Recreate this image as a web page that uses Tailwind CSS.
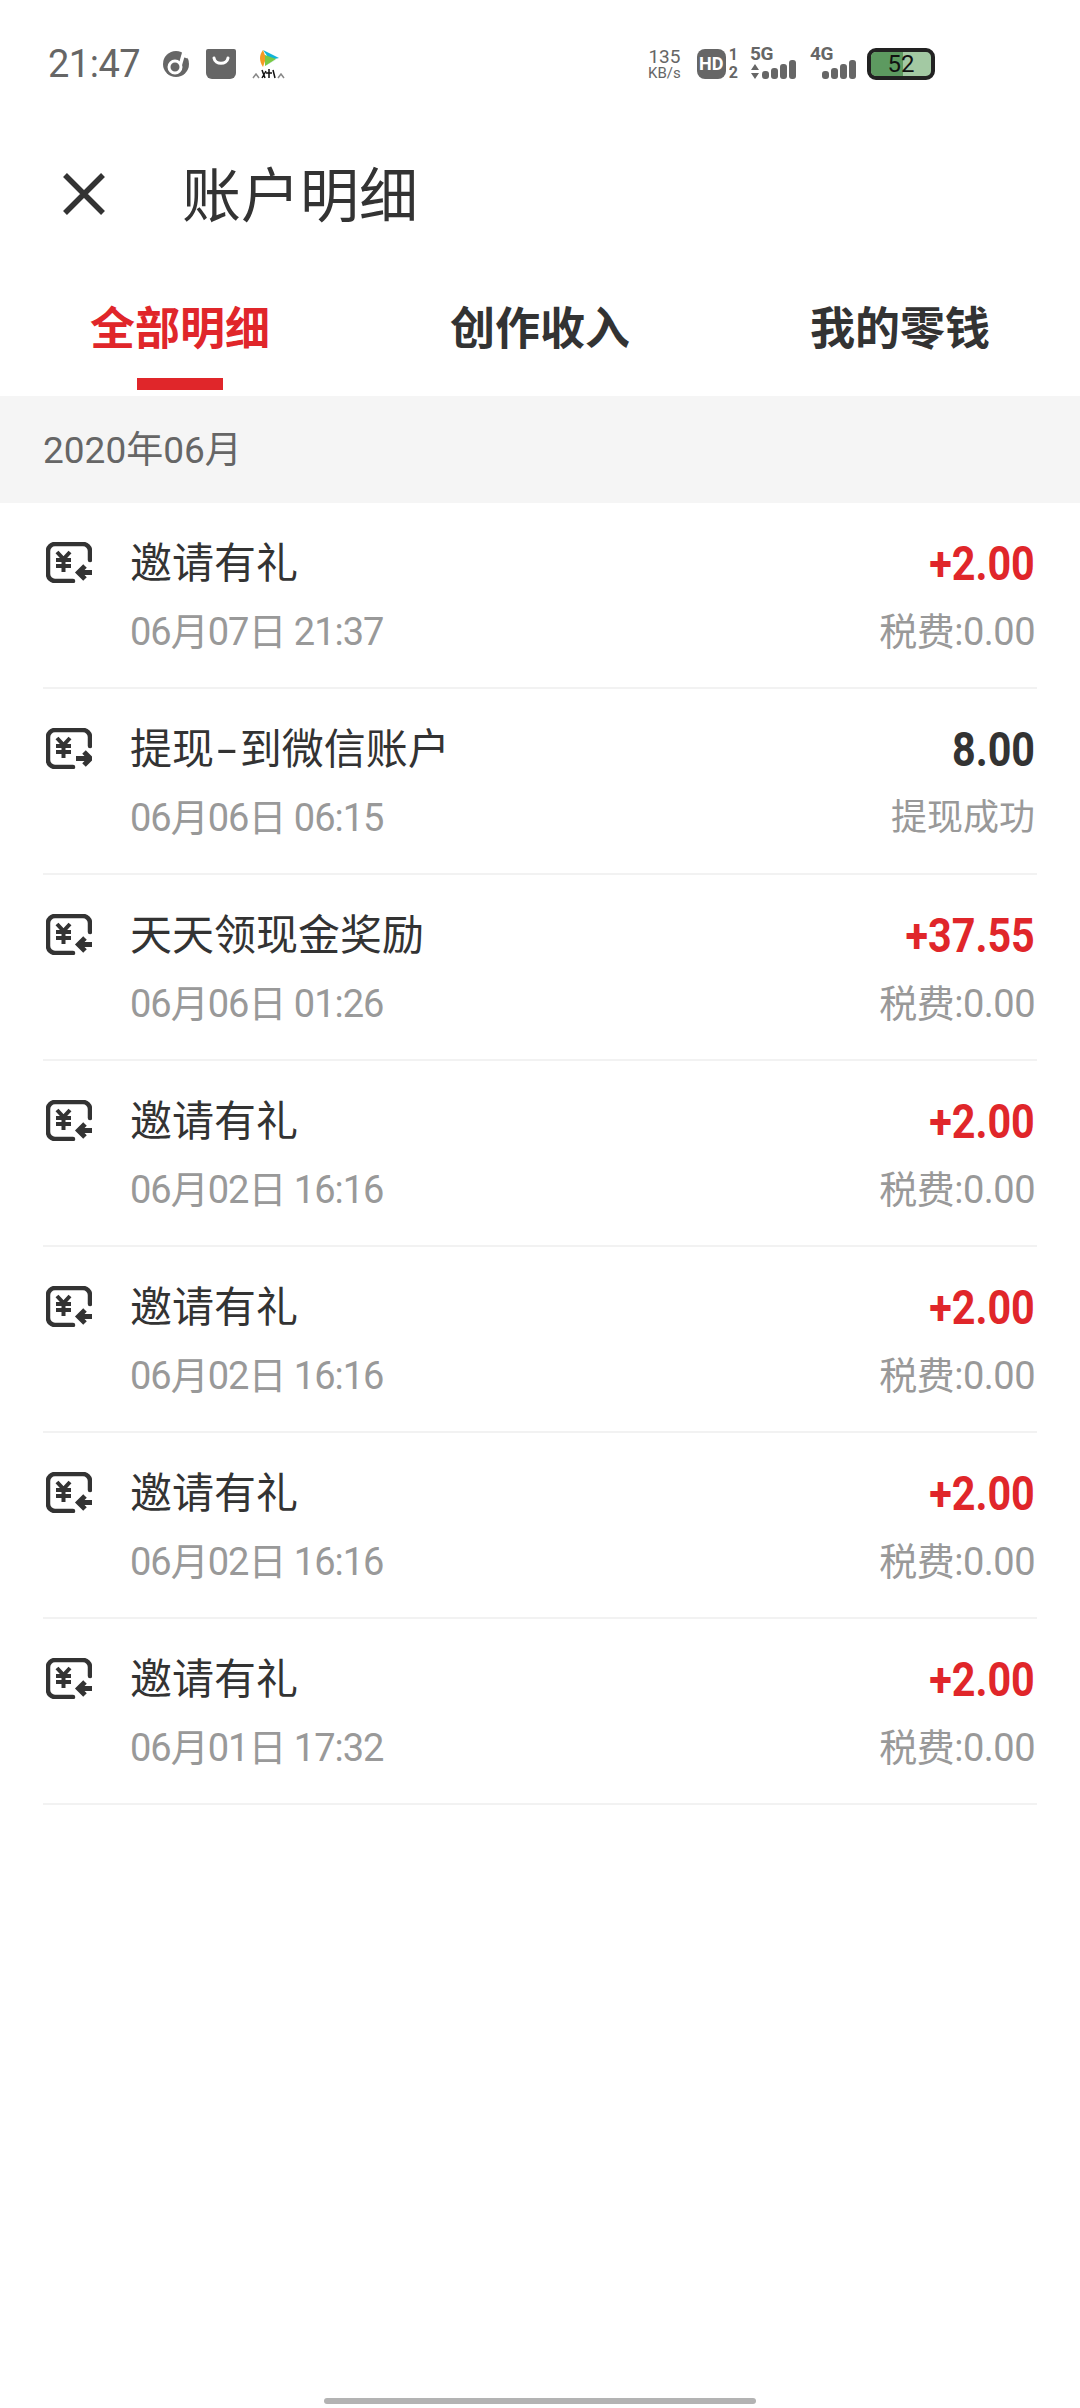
<!DOCTYPE html>
<html lang="zh">
<head>
  <meta charset="UTF-8">
  <meta name="viewport" content="width=device-width, initial-scale=1.0">
  <title>账户明细</title>
  <script src="https://cdn.jsdelivr.net/npm/@tailwindcss/browser@4"></script>
</head>
<body class="bg-white w-[1080px] h-[2408px] overflow-hidden relative font-['Roboto','Noto_Sans_CJK_SC',sans-serif] text-[#333]">
  <!-- status bar -->
  <div class="h-[128px] flex items-center pl-[48px] text-[#666]">
    <span class="text-[38px] leading-none w-[94px] tracking-[-0.5px]">21:47</span>
    <svg class="ml-[21px]" width="26" height="26" viewBox="0 0 26 26"><circle cx="13" cy="13" r="13" fill="#666"/><path d="M21 1L17 15" stroke="#fff" stroke-width="3.500" fill="none"/><path d="M19 4L25 6" stroke="#fff" stroke-width="3" fill="none"/><circle cx="12" cy="16" r="6" fill="#666" stroke="#fff" stroke-width="3"/></svg>
    <svg class="ml-[17px]" width="30" height="30" viewBox="0 0 30 30"><path d="M2 0H28a2 2 0 0 1 2 2V24a6 6 0 0 1-6 6H6a6 6 0 0 1-6-6V2a2 2 0 0 1 2-2Z" fill="#666"/><path d="M8 9c1 7 13 7 14 0" fill="none" stroke="#fff" stroke-width="3" stroke-linecap="round"/></svg>
    <svg class="ml-[16px]" width="33" height="30" viewBox="0 0 33 30"><path d="M11 1L27 9L18 11Z" fill="#10b4d8"/><path d="M11 1C7 6 7 12 11 18L14 9Z" fill="#f59a23"/><path d="M27 9L11 18L16 15Z" fill="#1aa6c8"/><path d="M13 6L24 10L13 17Z" fill="#7ac943"/><path d="M1 29l3-4 3 4M26 29l3-4 3 4" stroke="#888" stroke-width="1.500" fill="none"/><path d="M10 21l3 8M14 22l-4 7M17 20v9M14 24h6M21 21l2 8" stroke="#111" stroke-width="1.500"/></svg>
    <div class="ml-auto flex items-center mr-[145px]">
      <div class="flex flex-col items-center text-[#666] mr-[16px]">
        <span class="text-[19px] leading-[19px]">135</span>
        <span class="text-[15px] leading-[15px]">KB/s</span>
      </div>
      <div class="w-[29px] h-[30px] rounded-[8px] bg-[#666] text-white text-[18px] font-bold flex items-center justify-center leading-none">HD</div>
      <div class="flex flex-col ml-[3px] text-[16px] font-bold leading-[18px] text-[#666]"><span>1</span><span>2</span></div>
      <div class="ml-[12px] w-[48px] relative h-[32px]">
        <span class="absolute left-0 top-[-4px] text-[19px] font-bold leading-[20px] tracking-[-0.5px]">5G</span>
        <svg class="absolute left-0 top-0" width="48" height="32" viewBox="0 0 48 32" fill="#666"><path d="M1 22h8l-4-6zM1 25h8l-4 6z"/><rect x="12" y="23" width="7" height="8" rx="3"/><rect x="21" y="20" width="7" height="11" rx="3"/><rect x="30" y="16" width="7" height="15" rx="3"/><rect x="39" y="12" width="7" height="19" rx="3"/></svg>
      </div>
      <div class="ml-[12px] w-[48px] relative h-[32px]">
        <span class="absolute left-0 top-[-4px] text-[19px] font-bold leading-[20px] tracking-[-0.5px]">4G</span>
        <svg class="absolute left-0 top-0" width="48" height="32" viewBox="0 0 48 32" fill="#666"><rect x="12" y="23" width="7" height="8" rx="3"/><rect x="21" y="20" width="7" height="11" rx="3"/><rect x="30" y="16" width="7" height="15" rx="3"/><rect x="39" y="12" width="7" height="19" rx="3"/></svg>
      </div>
      <div class="ml-[9px] w-[68px] h-[32px] rounded-[9px] border-[4px] border-[#222] bg-[#a3c9a3] overflow-hidden relative flex items-center justify-center text-[24px] leading-none text-[#111]">
        <div class="absolute inset-y-0 left-0 w-[54%] bg-[#5d9a60]"></div>
        <span class="relative">52</span>
      </div>
    </div>
  </div>

  <!-- title -->
  <div class="h-[132px] flex items-center">
    <svg class="ml-[62px]" width="44" height="44" viewBox="0 0 44 44"><path d="M3 3L41 41M41 3L3 41" stroke="#333" stroke-width="5.500"/></svg>
    <h1 class="ml-[76px] mt-[4px] text-[59px] leading-none font-normal">账户明细</h1>
  </div>

  <!-- tabs -->
  <div class="h-[136px] grid grid-cols-3 text-[45px] font-bold">
    <div class="relative flex justify-center pt-[40px] text-[#e0262a] leading-[60px]">
      全部明细
      <div class="absolute left-[137px] top-[118px] w-[86px] h-[12px] bg-[#e0262a]"></div>
    </div>
    <div class="flex justify-center pt-[40px] leading-[60px]">创作收入</div>
    <div class="flex justify-center pt-[40px] leading-[60px]">我的零钱</div>
  </div>

  <!-- month -->
  <div class="h-[107px] bg-[#f5f5f5] pl-[43px] pt-[2px] flex items-center text-[37px] text-[#666]">2020年06月</div>

  <!-- list -->
  <div class="mx-[43px]">
    <div class="h-[186px] flex border-b-2 border-[#f2f2f2]">
      <svg class="mt-[39px] ml-[3px]" width="46" height="41" viewBox="0 0 46 41" fill="none" stroke="#333"><path d="M44 18V9a7 7 0 0 0-7-7H9a7 7 0 0 0-7 7v23a7 7 0 0 0 7 7h18" stroke-width="4.500" stroke-linecap="round"/><path d="M11 10l6.500 7 6.500-7M17.500 17v13M10 18h15M10 24h15" stroke-width="4"/><path d="M46 30.500H33M39 24l-6.500 6.500 6.500 6.500" stroke-width="5"/></svg>
      <div class="ml-[38px] flex-1">
        <div class="mt-[35px] text-[42px] leading-[52px]">邀请有礼</div>
        <div class="mt-[16px] text-[38px] tracking-[-1px] leading-[52px] text-[#999]">06月07日 21:37</div>
      </div>
      <div class="text-right pr-[2px]">
        <div class="mt-[35px] text-[48px] leading-[52px] font-bold text-[#e0262a] scale-x-[0.86] origin-right">+2.00</div>
        <div class="mt-[16px] text-[38px] tracking-[-0.5px] leading-[52px] text-[#999]">税费:0.00</div>
      </div>
    </div>
    <div class="h-[186px] flex border-b-2 border-[#f2f2f2]">
      <svg class="mt-[39px] ml-[3px]" width="46" height="41" viewBox="0 0 46 41" fill="none" stroke="#333"><path d="M44 18V9a7 7 0 0 0-7-7H9a7 7 0 0 0-7 7v23a7 7 0 0 0 7 7h18" stroke-width="4.500" stroke-linecap="round"/><path d="M11 10l6.500 7 6.500-7M17.500 17v13M10 18h15M10 24h15" stroke-width="4"/><path d="M30 30.500H44M38 24l6.500 6.500-6.500 6.500" stroke-width="5"/></svg>
      <div class="ml-[38px] flex-1">
        <div class="mt-[35px] text-[42px] leading-[52px]">提现<span class="inline-block mx-[7px] scale-x-[1.7]">-</span>到微信账户</div>
        <div class="mt-[16px] text-[38px] tracking-[-1px] leading-[52px] text-[#999]">06月06日 06:15</div>
      </div>
      <div class="text-right pr-[2px]">
        <div class="mt-[35px] text-[48px] leading-[52px] font-bold scale-x-[0.86] origin-right">8.00</div>
        <div class="mt-[16px] text-[36px] leading-[52px] text-[#999]">提现成功</div>
      </div>
    </div>
    <div class="h-[186px] flex border-b-2 border-[#f2f2f2]">
      <svg class="mt-[39px] ml-[3px]" width="46" height="41" viewBox="0 0 46 41" fill="none" stroke="#333"><path d="M44 18V9a7 7 0 0 0-7-7H9a7 7 0 0 0-7 7v23a7 7 0 0 0 7 7h18" stroke-width="4.500" stroke-linecap="round"/><path d="M11 10l6.500 7 6.500-7M17.500 17v13M10 18h15M10 24h15" stroke-width="4"/><path d="M46 30.500H33M39 24l-6.500 6.500 6.500 6.500" stroke-width="5"/></svg>
      <div class="ml-[38px] flex-1">
        <div class="mt-[35px] text-[42px] leading-[52px]">天天领现金奖励</div>
        <div class="mt-[16px] text-[38px] tracking-[-1px] leading-[52px] text-[#999]">06月06日 01:26</div>
      </div>
      <div class="text-right pr-[2px]">
        <div class="mt-[35px] text-[48px] leading-[52px] font-bold text-[#e0262a] scale-x-[0.86] origin-right">+37.55</div>
        <div class="mt-[16px] text-[38px] tracking-[-0.5px] leading-[52px] text-[#999]">税费:0.00</div>
      </div>
    </div>
    <div class="h-[186px] flex border-b-2 border-[#f2f2f2]">
      <svg class="mt-[39px] ml-[3px]" width="46" height="41" viewBox="0 0 46 41" fill="none" stroke="#333"><path d="M44 18V9a7 7 0 0 0-7-7H9a7 7 0 0 0-7 7v23a7 7 0 0 0 7 7h18" stroke-width="4.500" stroke-linecap="round"/><path d="M11 10l6.500 7 6.500-7M17.500 17v13M10 18h15M10 24h15" stroke-width="4"/><path d="M46 30.500H33M39 24l-6.500 6.500 6.500 6.500" stroke-width="5"/></svg>
      <div class="ml-[38px] flex-1">
        <div class="mt-[35px] text-[42px] leading-[52px]">邀请有礼</div>
        <div class="mt-[16px] text-[38px] tracking-[-1px] leading-[52px] text-[#999]">06月02日 16:16</div>
      </div>
      <div class="text-right pr-[2px]">
        <div class="mt-[35px] text-[48px] leading-[52px] font-bold text-[#e0262a] scale-x-[0.86] origin-right">+2.00</div>
        <div class="mt-[16px] text-[38px] tracking-[-0.5px] leading-[52px] text-[#999]">税费:0.00</div>
      </div>
    </div>
    <div class="h-[186px] flex border-b-2 border-[#f2f2f2]">
      <svg class="mt-[39px] ml-[3px]" width="46" height="41" viewBox="0 0 46 41" fill="none" stroke="#333"><path d="M44 18V9a7 7 0 0 0-7-7H9a7 7 0 0 0-7 7v23a7 7 0 0 0 7 7h18" stroke-width="4.500" stroke-linecap="round"/><path d="M11 10l6.500 7 6.500-7M17.500 17v13M10 18h15M10 24h15" stroke-width="4"/><path d="M46 30.500H33M39 24l-6.500 6.500 6.500 6.500" stroke-width="5"/></svg>
      <div class="ml-[38px] flex-1">
        <div class="mt-[35px] text-[42px] leading-[52px]">邀请有礼</div>
        <div class="mt-[16px] text-[38px] tracking-[-1px] leading-[52px] text-[#999]">06月02日 16:16</div>
      </div>
      <div class="text-right pr-[2px]">
        <div class="mt-[35px] text-[48px] leading-[52px] font-bold text-[#e0262a] scale-x-[0.86] origin-right">+2.00</div>
        <div class="mt-[16px] text-[38px] tracking-[-0.5px] leading-[52px] text-[#999]">税费:0.00</div>
      </div>
    </div>
    <div class="h-[186px] flex border-b-2 border-[#f2f2f2]">
      <svg class="mt-[39px] ml-[3px]" width="46" height="41" viewBox="0 0 46 41" fill="none" stroke="#333"><path d="M44 18V9a7 7 0 0 0-7-7H9a7 7 0 0 0-7 7v23a7 7 0 0 0 7 7h18" stroke-width="4.500" stroke-linecap="round"/><path d="M11 10l6.500 7 6.500-7M17.500 17v13M10 18h15M10 24h15" stroke-width="4"/><path d="M46 30.500H33M39 24l-6.500 6.500 6.500 6.500" stroke-width="5"/></svg>
      <div class="ml-[38px] flex-1">
        <div class="mt-[35px] text-[42px] leading-[52px]">邀请有礼</div>
        <div class="mt-[16px] text-[38px] tracking-[-1px] leading-[52px] text-[#999]">06月02日 16:16</div>
      </div>
      <div class="text-right pr-[2px]">
        <div class="mt-[35px] text-[48px] leading-[52px] font-bold text-[#e0262a] scale-x-[0.86] origin-right">+2.00</div>
        <div class="mt-[16px] text-[38px] tracking-[-0.5px] leading-[52px] text-[#999]">税费:0.00</div>
      </div>
    </div>
    <div class="h-[186px] flex border-b-2 border-[#f2f2f2]">
      <svg class="mt-[39px] ml-[3px]" width="46" height="41" viewBox="0 0 46 41" fill="none" stroke="#333"><path d="M44 18V9a7 7 0 0 0-7-7H9a7 7 0 0 0-7 7v23a7 7 0 0 0 7 7h18" stroke-width="4.500" stroke-linecap="round"/><path d="M11 10l6.500 7 6.500-7M17.500 17v13M10 18h15M10 24h15" stroke-width="4"/><path d="M46 30.500H33M39 24l-6.500 6.500 6.500 6.500" stroke-width="5"/></svg>
      <div class="ml-[38px] flex-1">
        <div class="mt-[35px] text-[42px] leading-[52px]">邀请有礼</div>
        <div class="mt-[16px] text-[38px] tracking-[-1px] leading-[52px] text-[#999]">06月01日 17:32</div>
      </div>
      <div class="text-right pr-[2px]">
        <div class="mt-[35px] text-[48px] leading-[52px] font-bold text-[#e0262a] scale-x-[0.86] origin-right">+2.00</div>
        <div class="mt-[16px] text-[38px] tracking-[-0.5px] leading-[52px] text-[#999]">税费:0.00</div>
      </div>
    </div>
  </div>

  <!-- gesture bar -->
  <div class="absolute left-[324px] top-[2398px] w-[432px] h-[6px] rounded-full bg-[#b3b3b3]"></div>
</body>
</html>
